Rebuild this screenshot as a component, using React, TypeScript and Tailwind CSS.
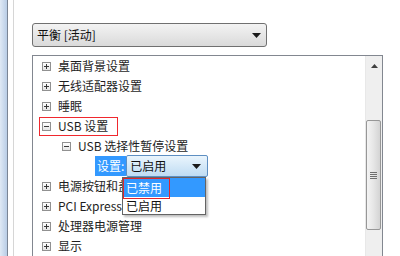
const font = { fontFamily: '"Noto Sans CJK SC", "Noto Sans", sans-serif' };

function PlusBox({ open }: { open?: boolean }) {
  return (
    <span className="flex h-[9px] w-[9px] shrink-0 items-center justify-center border border-[#919191] bg-gradient-to-b from-white to-[#e4e4e4]">
      <svg width="7" height="7" viewBox="0 0 7 7">
        <path d="M1 3.5h5" stroke="#3a3a3a" strokeWidth="1" />
        {open ? null : <path d="M3.5 1v5" stroke="#3a3a3a" strokeWidth="1" />}
      </svg>
    </span>
  );
}

function Row({ label, open, indent = 9 }: { label: string; open?: boolean; indent?: number }) {
  return (
    <div className="flex h-[20px] items-center gap-[7px]" style={{ paddingLeft: indent }}>
      <PlusBox open={open} />
      <span className="text-[12px] leading-none text-[#1e1e1e]">{label}</span>
    </div>
  );
}

export default function App() {
  return (
    <div className="flex h-[256px] w-[400px] overflow-hidden bg-white" style={font}>
      <div className="w-[7px] bg-gradient-to-r from-[#dfe9f5] to-[#b9cde6]" />
      <div className="w-px bg-[#7a8595]" />
      <div className="w-[5px] bg-white" />
      <div className="w-px bg-[#d6d6d6]" />
      <div className="flex-1 pl-[18px] pt-[23px]">
        <div className="flex h-[24px] w-[235px] items-center justify-between rounded-[3px] border border-[#707070] bg-gradient-to-b from-[#f3f3f3] to-[#dadada] pl-[4px] pr-[5px]">
          <span className="text-[12px] leading-none text-[#111]">平衡 [活动]</span>
          <svg width="9" height="5" viewBox="0 0 9 5">
            <path d="M0 0h9L4.5 5z" fill="#1a1a1a" />
          </svg>
        </div>

        <div className="mt-[8px] flex h-[210px] w-[351px] border border-b-0 border-[#828790]">
          <div className="relative flex-1">
            <Row label="桌面背景设置" />
            <Row label="无线适配器设置" />
            <Row label="睡眠" />
            <div className="relative">
              <Row label="USB 设置" open />
              <div className="absolute left-[6px] top-[1px] h-[19px] w-[79px] border border-[#f0282e]" />
            </div>
            <Row label="USB 选择性暂停设置" open indent={29} />
            <div className="relative flex h-[20px] items-center pl-[62px]">
              <span className="flex h-[20px] items-center bg-[#3399ff] px-[2px] text-[12px] leading-none text-white">设置:</span>
              <div className="flex h-[22px] w-[82px] items-center justify-between rounded-[2px] border border-[#5e8fc2] bg-gradient-to-b from-[#eaf5fd] to-[#bfdcf3] pl-[3px] pr-[6px]">
                <span className="text-[12px] leading-none text-[#111]">已启用</span>
                <svg width="9" height="5" viewBox="0 0 9 5">
                  <path d="M0 0h9L4.5 5z" fill="#1a1a1a" />
                </svg>
              </div>
              {/* open dropdown list, lies over the rows below */}
              <div className="absolute left-[89px] top-[21px] z-10 w-[84px] border border-[#646464] bg-white shadow-[2px_2px_2px_rgba(0,0,0,0.25)]">
                <div className="relative flex h-[19px] items-center bg-[#3399ff] pl-[3px] text-[12px] leading-none text-white">
                  已禁用
                  <div className="absolute left-0 top-0 h-[21px] w-[47px] border border-[#e0262e]" />
                </div>
                <div className="flex h-[17px] items-center pl-[3px] text-[12px] leading-none text-[#111]">已启用</div>
              </div>
            </div>
            <Row label="电源按钮和盖子" />
            <Row label="PCI Express" />
            <Row label="处理器电源管理" />
            <Row label="显示" />
          </div>

          <div className="flex w-[17px] flex-col border-l border-[#e8e8e8] bg-[#efefef]">
            <div className="flex h-[17px] items-center justify-center pt-[3px]">
              <svg width="7" height="4" viewBox="0 0 7 4">
                <path d="M0 4h7L3.5 0z" fill="#404040" />
              </svg>
            </div>
            <div className="mt-[47px] flex h-[110px] w-[15px] items-center justify-center rounded-[2px] border border-[#979797] bg-gradient-to-r from-[#f4f4f4] via-[#e6e6e6] to-[#d4d4d4]">
              <svg width="7" height="7" viewBox="0 0 7 7">
                <path d="M0 0.5h7M0 2.5h7M0 4.5h7M0 6.5h7" stroke="#6e6e6e" strokeWidth="1" />
              </svg>
            </div>
          </div>
        </div>
      </div>
    </div>
  );
}
